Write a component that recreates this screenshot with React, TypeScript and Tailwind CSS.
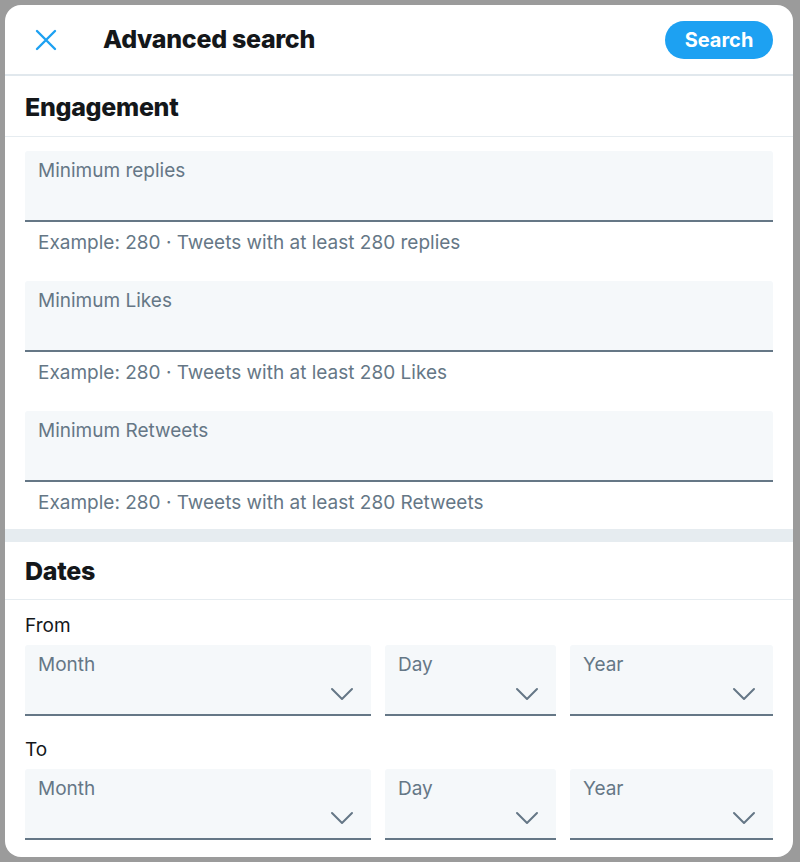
import React from 'react';

const font = { fontFamily: 'Inter, "Noto Sans", sans-serif' };

function Chevron() {
  return (
    <svg width="24" height="14" viewBox="0 0 24 14" className="absolute right-[17px] bottom-[13px]">
      <polyline points="2,2 12,12 22,2" fill="none" stroke="#657786" strokeWidth="2" strokeLinecap="round" strokeLinejoin="round" />
    </svg>
  );
}

function TextField({ label, hint }: { label: string; hint: string }) {
  return (
    <div>
      <div className="h-[71px] bg-[#f5f8fa] border-b-2 border-[#657786] rounded-t-[3px] px-[13px] pt-[8px]">
        <span className="text-[19px] leading-[22px] text-[#657786]">{label}</span>
      </div>
      <p className="pt-[10px] px-[13px] text-[19px] leading-[22px] text-[#657786]">{hint}</p>
    </div>
  );
}

function SelectField({ label }: { label: string }) {
  return (
    <div className="relative h-[71px] bg-[#f5f8fa] border-b-2 border-[#657786] rounded-t-[3px] px-[13px] pt-[8px]">
      <span className="text-[19px] leading-[22px] text-[#657786]">{label}</span>
      <Chevron />
    </div>
  );
}

function DateRow({ label, top }: { label: string; top: string }) {
  return (
    <div className={top}>
      <div className="text-[19px] leading-[22px] text-[#14171a] mb-[8px]">{label}</div>
      <div className="grid grid-cols-[346px_171px_203px] gap-[14px]">
        <SelectField label="Month" />
        <SelectField label="Day" />
        <SelectField label="Year" />
      </div>
    </div>
  );
}

export default function App() {
  return (
    <div className="h-[862px] w-[800px] bg-[#9b9b9b] p-[5px] overflow-hidden" style={font}>
      <div className="w-[788px] h-[852px] bg-white rounded-[16px] overflow-hidden flex flex-col">
        <header className="h-[71px] shrink-0 flex items-center justify-between pl-[30px] pr-[20px] border-b-2 border-[#e1e8ed]">
          <div className="flex items-center">
            <svg width="22" height="22" viewBox="0 0 22 22">
              <path d="M2 2 L20 20 M20 2 L2 20" stroke="#1da1f2" strokeWidth="2.4" strokeLinecap="round" />
            </svg>
            <h1 className="ml-[46px] text-[25px] font-extrabold text-[#14171a] tracking-[-0.3px]">Advanced search</h1>
          </div>
          <button className="h-[38px] w-[108px] rounded-full bg-[#1da1f2] text-white text-[20px] font-bold">Search</button>
        </header>

        <div className="h-[61px] shrink-0 flex items-center pt-[3px] px-[20px] border-b border-[#e6ecf0]">
          <h2 className="text-[25px] font-extrabold text-[#14171a] tracking-[-0.3px]">Engagement</h2>
        </div>
        <div className="px-[20px] pt-[14px] pb-[15px] flex flex-col gap-[27px]">
          <TextField label="Minimum replies" hint="Example: 280 · Tweets with at least 280 replies" />
          <TextField label="Minimum Likes" hint="Example: 280 · Tweets with at least 280 Likes" />
          <TextField label="Minimum Retweets" hint="Example: 280 · Tweets with at least 280 Retweets" />
        </div>
        <div className="h-[13px] shrink-0 bg-[#e6ecf0]" />

        <div className="h-[58px] shrink-0 flex items-center pt-[3px] px-[20px] border-b border-[#e6ecf0]">
          <h2 className="text-[25px] font-extrabold text-[#14171a] tracking-[-0.3px]">Dates</h2>
        </div>
        <div className="px-[20px]">
          <DateRow label="From" top="pt-[15px]" />
          <DateRow label="To" top="pt-[23px]" />
        </div>
      </div>
    </div>
  );
}
